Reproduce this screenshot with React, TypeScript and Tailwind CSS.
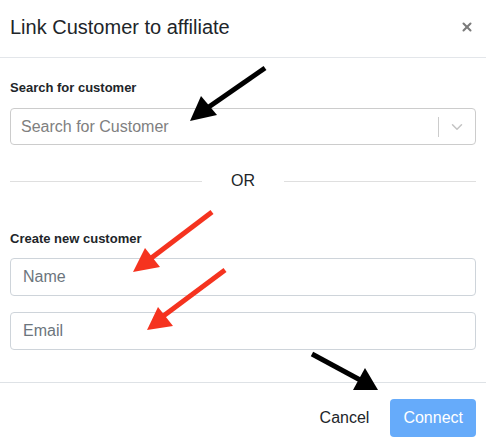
import { ChevronDown, X } from 'lucide-react';

type Arrow = { line: [number, number, number, number]; head: string; color: string };

const arrows: Arrow[] = [
  { line: [265, 68, 203, 111], head: '190,121 201,96 217,115', color: '#000000' },
  { line: [212, 212, 150, 259], head: '133,272 145,248 160,267', color: '#f5331f' },
  { line: [225, 270, 162, 317], head: '147,330 158,307 173,326', color: '#f5331f' },
  { line: [312, 354, 362, 381], head: '378,390 365,368 353,390', color: '#000000' },
];

function Annotations() {
  return (
    <svg className="pointer-events-none absolute inset-0" width={486} height={446}>
      {arrows.map(({ line, head, color }, i) => (
        <g key={i}>
          <line
            x1={line[0]}
            y1={line[1]}
            x2={line[2]}
            y2={line[3]}
            stroke={color}
            strokeWidth={5}
          />
          <polygon points={head} fill={color} />
        </g>
      ))}
    </svg>
  );
}

export default function App() {
  return (
    <div className="relative h-[446px] w-[486px] overflow-hidden bg-white font-['Liberation_Sans',Arial,sans-serif] text-[#212529]">
      <header className="flex h-[58px] items-center justify-between border-b border-[#e3e6ea] pb-[4px] pl-[10px] pr-[12px]">
        <h2 className="text-[20px] leading-[24px]">Link Customer to affiliate</h2>
        <button type="button" className="text-[#7b7b7b]">
          <X size={14} strokeWidth={3.5} />
        </button>
      </header>

      <section className="px-[10px] pt-[22px]">
        <label className="block text-[13px] font-bold leading-[16px]">Search for customer</label>
        <div className="mt-[12px] flex h-[37px] items-center rounded-[4px] border border-[#cccccc]">
          <span className="flex-1 pl-[10px] text-[16px] text-[#808080]">Search for Customer</span>
          <span className="h-[20px] w-px bg-[#cccccc]" />
          <span className="flex w-[36px] justify-center text-[#c4c4c4]">
            <ChevronDown size={18} strokeWidth={2} />
          </span>
        </div>

        <div className="mt-[26px] flex h-[20px] items-center">
          <span className="h-px flex-1 bg-[#dfdfdf]" />
          <span className="w-[82px] text-center text-[16px] leading-[20px]">OR</span>
          <span className="h-px flex-1 bg-[#dfdfdf]" />
        </div>

        <label className="mt-[40px] block text-[13px] font-bold leading-[16px]">Create new customer</label>
        <input
          placeholder="Name"
          className="mt-[11px] block h-[38px] w-full rounded-[4px] border border-[#ced4da] px-[12px] text-[16px] placeholder:text-[#6c757d]"
        />
        <input
          placeholder="Email"
          className="mt-[16px] block h-[38px] w-full rounded-[4px] border border-[#ced4da] px-[12px] text-[16px] placeholder:text-[#6c757d]"
        />
      </section>

      <footer className="mt-[32px] flex items-center justify-end gap-[9px] border-t border-[#dee2e6] pr-[10px] pt-[16px]">
        <button type="button" className="h-[38px] px-[12px] text-[16px]">
          Cancel
        </button>
        <button
          type="button"
          className="h-[38px] rounded-[4px] bg-[#66abfa] px-[13px] text-[16px] text-white"
        >
          Connect
        </button>
      </footer>

      <Annotations />
    </div>
  );
}
